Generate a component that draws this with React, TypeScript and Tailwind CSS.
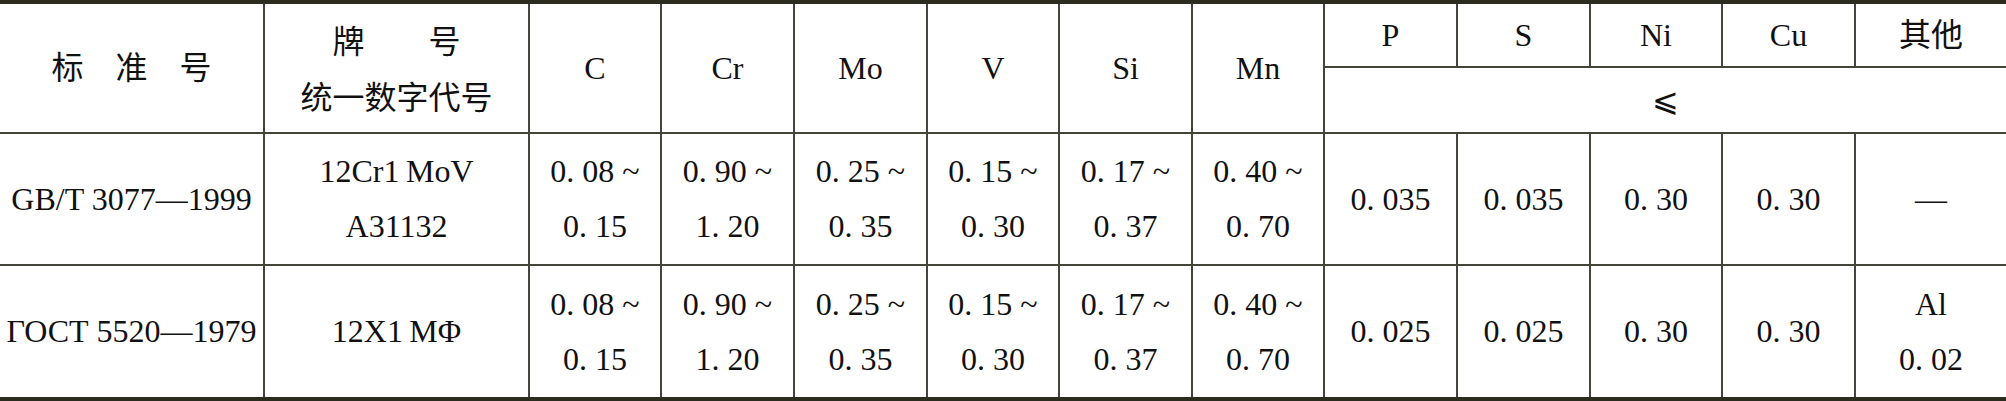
const rows = [
  {
    std: "GB/T 3077—1999",
    grade: ["12Cr1\u2009MoV", "A31132"],
    ranges: [
      ["0. 08 ~", "0. 15"],
      ["0. 90 ~", "1. 20"],
      ["0. 25 ~", "0. 35"],
      ["0. 15 ~", "0. 30"],
      ["0. 17 ~", "0. 37"],
      ["0. 40 ~", "0. 70"],
    ],
    limits: ["0. 035", "0. 035", "0. 30", "0. 30"],
    other: ["—"],
  },
  {
    std: "ГОСТ 5520—1979",
    grade: ["12X1\u2009MΦ"],
    ranges: [
      ["0. 08 ~", "0. 15"],
      ["0. 90 ~", "1. 20"],
      ["0. 25 ~", "0. 35"],
      ["0. 15 ~", "0. 30"],
      ["0. 17 ~", "0. 37"],
      ["0. 40 ~", "0. 70"],
    ],
    limits: ["0. 025", "0. 025", "0. 30", "0. 30"],
    other: ["Al", "0. 02"],
  },
];

const cell = "bg-white flex flex-col items-center justify-center text-center leading-[55px]";

function Lines({ lines }: { lines: string[] }) {
  return (
    <>
      {lines.map((l, i) => (
        <span key={i} className="whitespace-pre">
          {l}
        </span>
      ))}
    </>
  );
}

export default function App() {
  return (
    <div className="w-[2006px] h-[401px] bg-white">
      <div className="grid grid-cols-[263px_263px_130px_131px_131px_130px_131px_130px_131px_131px_130px_131px_150px] grid-rows-[62px_64px_130px_131px] gap-[2px] bg-[#45443a] border-t-4 border-b-4 border-[#2c2b1f] text-[32px] text-[#111] [font-family:'Liberation_Serif','Noto_Sans_CJK_SC',serif]">
        <div className={`${cell} row-span-2`}>
          <span className="whitespace-pre">标　准　号</span>
        </div>
        <div className={`${cell} row-span-2 leading-[56px] pt-1`}>
          <span className="whitespace-pre">牌　　号</span>
          <span>统一数字代号</span>
        </div>
        {["C", "Cr", "Mo", "V", "Si", "Mn"].map((e) => (
          <div key={e} className={`${cell} row-span-2`}>
            {e}
          </div>
        ))}
        {["P", "S", "Ni", "Cu", "其他"].map((e) => (
          <div key={e} className={cell}>
            {e}
          </div>
        ))}
        <div className={`${cell} col-span-5 col-start-9 row-start-2`}>⩽</div>

        {rows.map((r) => (
          <div key={r.std} className="contents">
            <div className={`${cell} whitespace-nowrap`}>{r.std}</div>
            <div className={cell}>
              <Lines lines={r.grade} />
            </div>
            {r.ranges.map((v, i) => (
              <div key={i} className={cell}>
                <Lines lines={v} />
              </div>
            ))}
            {r.limits.map((v, i) => (
              <div key={i} className={cell}>
                {v}
              </div>
            ))}
            <div className={cell}>
              <Lines lines={r.other} />
            </div>
          </div>
        ))}
      </div>
    </div>
  );
}
